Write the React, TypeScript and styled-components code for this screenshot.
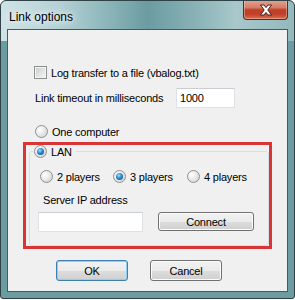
import React from "react";
import styled, { createGlobalStyle, css } from "styled-components";

const GlobalStyle = createGlobalStyle`
  html, body {
    margin: 0;
    padding: 0;
    background: #ffffff;
  }
  body {
    font-family: "Liberation Sans", Arial, sans-serif;
    font-size: 11px;
    letter-spacing: -0.2px;
    color: #000000;
  }
`;

const Window = styled.div`
  box-sizing: border-box;
  width: 295px;
  height: 299px;
  display: flex;
  flex-direction: column;
  border: 1px solid #2f4245;
  border-radius: 6px 6px 3px 3px;
  padding: 0 6px 6px 6px;
  background:
    linear-gradient(
        to right,
        #cfe3e6 0%,
        #b4d1d5 20%,
        #8fb8bc 35%,
        #6b9ca1 50%,
        #86b0b4 65%,
        #a8c8cb 80%,
        #93b9bd 100%
      )
      top / 100% 40px no-repeat,
    #6a9ca1;
  overflow: hidden;
`;

const TitleBar = styled.div`
  height: 28px;
  display: flex;
  align-items: flex-start;
  justify-content: space-between;
`;

const Title = styled.div`
  margin: 9px 0 0 2px;
  font-size: 12px;
  line-height: 14px;
  letter-spacing: 0;
  color: #000000;
  text-shadow: 0 0 6px #ffffff, 0 0 10px #ffffff;
`;

const CloseButton = styled.div`
  box-sizing: border-box;
  width: 45px;
  height: 20px;
  margin-top: -1px;
  display: flex;
  align-items: center;
  justify-content: center;
  border: 1px solid #5a2a22;
  border-top: none;
  border-radius: 0 0 4px 4px;
  background: linear-gradient(
    to bottom,
    #e5a494 0%,
    #d47d68 40%,
    #bf3f28 52%,
    #c1402a 75%,
    #d9704f 100%
  );
  box-shadow: inset 0 0 0 1px rgba(255, 220, 210, 0.4);
`;

const Client = styled.div`
  flex: 1;
  display: flex;
  flex-direction: column;
  border: 1px solid #3e5d61;
  background: #f0f0f0;
`;

const OptionRow = styled.label<{ $indent: number; $top: number }>`
  display: flex;
  align-items: center;
  gap: 4px;
  height: 13px;
  margin-top: ${(p) => p.$top}px;
  padding-left: ${(p) => p.$indent}px;
  white-space: nowrap;
`;

const CheckBox = styled.span`
  box-sizing: border-box;
  width: 13px;
  height: 13px;
  flex: none;
  border: 1px solid #8e8f8f;
  background: linear-gradient(135deg, #c9c9c9 0%, #e6e6e6 60%, #f6f6f6 100%);
  box-shadow: inset 0 0 0 1px #f4f4f4;
`;

const Radio = styled.span<{ $checked?: boolean }>`
  position: relative;
  box-sizing: border-box;
  width: 13px;
  height: 13px;
  flex: none;
  border-radius: 50%;
  border: 1px solid #8f9192;
  background: radial-gradient(circle at 35% 35%, #ffffff 0%, #eaeaea 45%, #c9c9c9 100%);
  ${(p) =>
    p.$checked &&
    css`
      &::after {
        content: "";
        position: absolute;
        left: 2px;
        top: 2px;
        width: 7px;
        height: 7px;
        border-radius: 50%;
        background: radial-gradient(circle at 40% 35%, #9fe0ff 0%, #2a8acb 45%, #0e4574 100%);
      }
    `}
`;

const TimeoutRow = styled.div`
  display: grid;
  grid-template-columns: 141px 59px;
  align-items: center;
  margin-top: 9px;
  padding-left: 27px;
`;

const TextBox = styled.div<{ $width: number }>`
  box-sizing: border-box;
  width: ${(p) => p.$width}px;
  height: 20px;
  padding: 0 3px;
  display: flex;
  align-items: center;
  background: #ffffff;
  border: 1px solid #dfe2e5;
  border-top-color: #c9cdd2;
`;

const Highlight = styled.div`
  box-sizing: border-box;
  width: 249px;
  height: 107px;
  margin: 4px 0 0 15px;
  padding: 0 3px;
  border: 3px solid #d93537;
`;

const GroupBox = styled.fieldset`
  box-sizing: border-box;
  width: 240px;
  height: 101px;
  margin: 0;
  padding: 0;
  border: 1px solid #d5dfe5;
  border-radius: 3px;
`;

const Legend = styled.legend`
  display: flex;
  align-items: center;
  gap: 4px;
  margin-left: 3px;
  padding: 0 4px 0 1px;
  height: 13px;
`;

const PlayersRow = styled.div`
  display: grid;
  grid-template-columns: 73px 74px auto;
  margin-top: 12px;
  padding-left: 10px;
`;

const PlayerOption = styled.label`
  display: flex;
  align-items: center;
  gap: 4px;
  height: 13px;
  white-space: nowrap;
`;

const FieldLabel = styled.div`
  margin: 11px 0 0 13px;
  line-height: 13px;
`;

const ServerRow = styled.div`
  display: flex;
  align-items: flex-start;
  gap: 15px;
  margin-top: 5px;
  padding-left: 8px;
`;

const Button = styled.div<{ $width: number; $height: number; $default?: boolean }>`
  box-sizing: border-box;
  width: ${(p) => p.$width}px;
  height: ${(p) => p.$height}px;
  display: flex;
  align-items: center;
  justify-content: center;
  border: 1px solid #707070;
  border-radius: 3px;
  background: linear-gradient(
    to bottom,
    #f2f2f2 0%,
    #ebebeb 50%,
    #dddddd 51%,
    #cfcfcf 100%
  );
  box-shadow: inset 0 0 0 1px #fcfcfc;
  ${(p) =>
    p.$default &&
    css`
      border-color: #3c7fb1;
      box-shadow: inset 0 0 0 1px #8ad2f5;
    `}
`;

const ButtonRow = styled.div`
  display: flex;
  gap: 22px;
  margin: 11px 0 0 48px;
`;

export default function App() {
  return (
    <>
      <GlobalStyle />
      <Window>
        <TitleBar>
          <Title>Link options</Title>
          <CloseButton>
            <svg width="14" height="12" viewBox="0 0 14 12">
              <path
                d="M1.5 1 H5 L7 3.6 L9 1 H12.5 L8.8 6 L12.5 11 H9 L7 8.4 L5 11 H1.5 L5.2 6 Z"
                fill="#ffffff"
                stroke="#4a2018"
                strokeWidth="1"
                strokeLinejoin="round"
              />
            </svg>
          </CloseButton>
        </TitleBar>
        <Client>
          <OptionRow $indent={26} $top={36}>
            <CheckBox />
            Log transfer to a file (vbalog.txt)
          </OptionRow>
          <TimeoutRow>
            <span>Link timeout in milliseconds</span>
            <TextBox $width={59}>1000</TextBox>
          </TimeoutRow>
          <OptionRow $indent={27} $top={17}>
            <Radio />
            One computer
          </OptionRow>
          <Highlight>
            <GroupBox>
              <Legend>
                <Radio $checked />
                LAN
              </Legend>
              <PlayersRow>
                <PlayerOption>
                  <Radio />2 players
                </PlayerOption>
                <PlayerOption>
                  <Radio $checked />3 players
                </PlayerOption>
                <PlayerOption>
                  <Radio />4 players
                </PlayerOption>
              </PlayersRow>
              <FieldLabel>Server IP address</FieldLabel>
              <ServerRow>
                <TextBox $width={105} />
                <Button $width={96} $height={19}>
                  Connect
                </Button>
              </ServerRow>
            </GroupBox>
          </Highlight>
          <ButtonRow>
            <Button $width={72} $height={21} $default>
              OK
            </Button>
            <Button $width={72} $height={21}>
              Cancel
            </Button>
          </ButtonRow>
        </Client>
      </Window>
    </>
  );
}
